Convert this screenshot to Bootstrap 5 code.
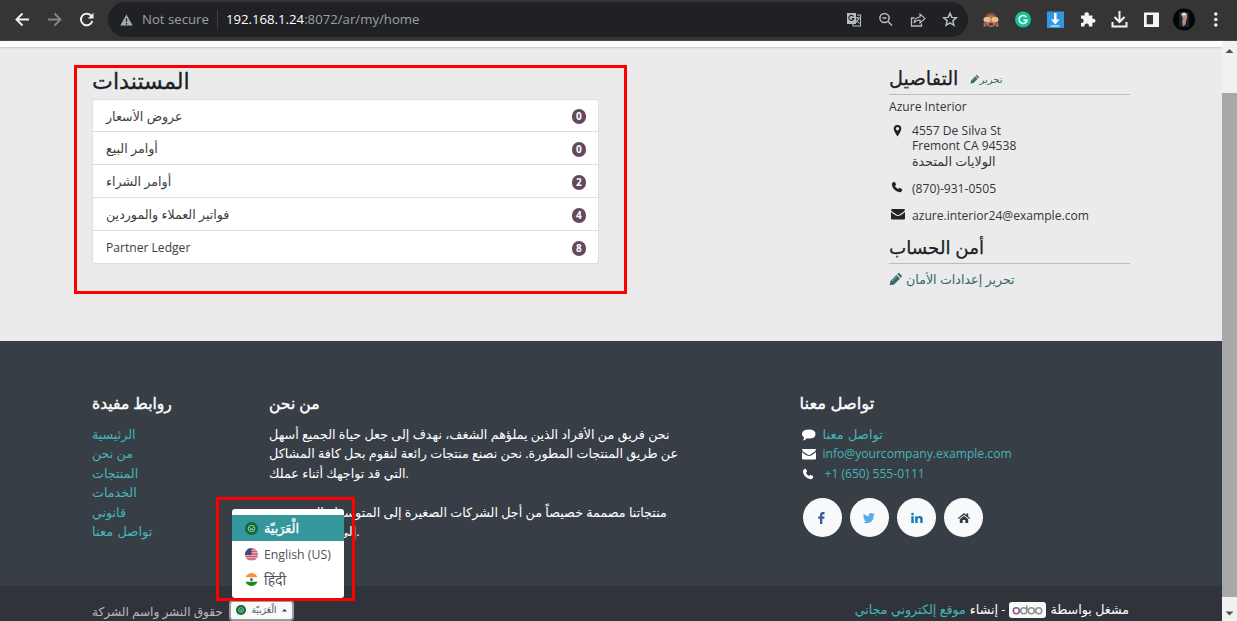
<!DOCTYPE html>
<html lang="ar" dir="ltr">
<head>
<meta charset="utf-8">
<title>حسابي</title>
<link href="https://cdn.jsdelivr.net/npm/bootstrap@5.3.0/dist/css/bootstrap.min.css" rel="stylesheet">
<style>
html,body{height:621px;overflow:hidden}
body{font-family:"Open Sans","DejaVu Sans","Noto Sans",sans-serif;font-size:12.65px;line-height:15.6px;color:#32363a;background:#ebebeb}
a{text-decoration:none}
svg{display:block;flex:none}
.latin{font-size:12.1px}
.chrome-bar{height:41px;background:#353535;border-bottom:1px solid #4a4a4a}
.address{left:108px;width:860px;height:35px;top:2px;border-radius:18px;background:#202124;color:#9aa0a6;font-size:13.2px}
.viewport{height:580px}
.doc{width:1222px}
.top-strip{height:6px;background:#fff;box-shadow:0 1px 2px rgba(0,0,0,.15)}
.portal{height:294px;padding:19px 92px 0 92px}
.docs{width:507px}
.docs h3{font-size:22.2px;line-height:29px;margin:0 0 4px;color:#1c2026;-webkit-text-stroke:.3px}
.docs .list-group{--bs-list-group-border-color:#dfdfdf;--bs-list-group-border-radius:3px}
.docs .list-group-item{height:33px;padding:2px 12px 0 13px;color:#3a3e42}
.count-pill{width:14.5px;height:15px;border-radius:8px;background:#62495b;color:#fff;font-size:10px;font-weight:700;line-height:15px;text-align:center}
.side{width:241px;margin-top:-1px}
.side h4{font-size:19.3px;line-height:25px;color:#1c2026;margin:0;-webkit-text-stroke:.25px}
.side .security{font-size:18.3px;line-height:24px;margin-top:11px}
.teal-dark{color:#35686d}
.rule{height:1px;background:#bcbcbc}
.contact-ico{margin:0 9px 0 2px}
.contact-mail{margin-top:11px}
.contact-mail .contact-ico{margin-right:7px}
.edit-sm{font-size:10px}
.foot{height:245px;background:#383e45;color:#fff;padding:52px 93px 0 92px;line-height:19.4px}
.foot h5{font-size:15.6px;font-weight:400;line-height:20px;margin:0 0 12px;-webkit-text-stroke:.4px}
.foot a,.legal a{color:#45b5b9}
.links-col{width:177px}
.about-col{width:530.5px}
.about-col .text-nowrap{font-size:12.72px}
.foot-ico{margin:0 7px 0 2px}
.spaced{word-spacing:1px;font-size:13px}
.contact-col h5{font-size:16.4px}
.social{width:39px;height:39px;background:#f8f9fa}
.socials{margin-top:15px;padding-left:3px;column-gap:8.3px}
.legal{height:35px;background:#30343a;padding:12px 93px 0 92px;color:#fff}
.legal-left{width:202px;height:24px}
.copy{color:#b9bbbd;font-size:12.1px}
.powered{height:24px;font-size:12.7px}
.lang-btn{width:65px;height:21px;border:2px solid #9a9c9f;border-radius:4px;background:#f8f9fa;font-size:9.2px;color:#4c4f52;padding:0 5px}
.lang-menu{--bs-dropdown-min-width:112px;width:112px;left:232px;top:509px;height:89px;padding:6px 0;border:0;border-radius:3px;font-size:12.3px}
.lang-menu .dropdown-item{height:25.6px;padding:2px 0 0 13px;color:#4f5357;gap:6px}
.lang-menu .dropdown-item.active{background:#35979c;color:#fff}
.lang-menu .native{-webkit-text-stroke:.3px;font-size:12.8px}
.lang-menu .hindi{font-size:14px}
.mark-box{border:3.5px solid #f00;z-index:1100;pointer-events:none}
.mark-docs{left:74px;top:65px;width:553px;height:229px}
.mark-langs{left:216px;top:497px;width:139px;height:104px}
.sbar{width:15px;background:#f1f1f1}
.thumb{height:504px;background:#a8a8a8}
.odoo-tag{background:#f8f9fa;border-radius:3px;width:37px;height:16px}
</style>
</head>
<body class="position-relative">
<svg width="0" height="0" class="position-absolute">
<defs>
<symbol id="pencil" viewBox="0 0 14 14"><path fill="currentColor" d="M.8 13.200l.8-4.700L8 2.100l3.900 3.900L5.500 12.400zM8.900 1.300l1-1q.6-.5 1.200 0l2.600 2.600q.5.600 0 1.200l-1 1z"/><path d="M3.200 8.900l5-5" stroke="#ebebeb" stroke-width=".7"/></symbol>
<symbol id="phone" viewBox="0 0 14 14"><path fill="currentColor" d="M3.200 1.300 4.400 1 6 4.200 4.600 5.700Q5.800 8.200 8.400 9.400L9.900 8l3.100 1.600q.2 1.300-.5 2.300-1 1.200-2.700 1.100Q5.600 12.300 3 8.900.9 6.500 1 3.600q.3-1.800 2.200-2.300z"/></symbol>
<symbol id="mail" viewBox="0 0 14 12"><path fill="currentColor" d="M1 1h12q1 0 1 1Q13.500 3.500 8.500 6.500q-1.500 1-3 0Q.5 3.500 0 2q0-1 1-1zM0 4q4.500 3.800 7 4 2.500-.2 7-4v6.500q0 1-1 1H1q-1 0-1-1z"/></symbol>
<symbol id="arab" viewBox="0 0 14 14"><circle cx="7" cy="7" r="7" fill="#0b6b3a"/><circle cx="7" cy="7" r="3.500" fill="none" stroke="#a9cdb8" stroke-width="1"/><path d="M4.700 6q2.300 3 4.600 0M5 8.200h4" fill="none" stroke="#c6dccf" stroke-width=".8"/></symbol>
</defs></svg>

<nav class="chrome-bar position-relative d-flex align-items-center">
<svg width="108" height="40" fill="none" stroke="#f1f1f1" stroke-width="1.900"><path d="M29 19.500H17M22.500 13.500l-6 6 6 6"/><path stroke="#858585" d="M48 19.500h12M54.500 13.500l6 6-6 6"/><path d="M91.500 16.200a5.800 5.800 0 1 0 .8 4.800"/><path d="M93.500 12.800v5.700h-5.700z" fill="#f1f1f1" stroke="none"/></svg>
<div class="address position-absolute d-flex align-items-center">
<svg class="ms-2" width="22" height="18" viewBox="0 0 22 18"><path d="M10.500 3.500l6.200 11H4.300z" fill="#a6aaae"/><path d="M10.500 7.500v3.300M10.500 12v1.400" stroke="#202124" stroke-width="1.300"/></svg>
<span class="ms-1">Not secure</span><span class="vr ms-2 me-2 my-2"></span><span><span class="text-white">192.168.1.24</span>:8072/ar/my/home</span>
</div>
<svg class="position-absolute start-0 top-0" width="1237" height="40" fill="none" stroke="#b8bbbe" stroke-width="1.500">
<rect x="847" y="13" width="9" height="11" fill="#b8bbbe" stroke="none"/><path d="M853.500 16.500a2.500 2.500 0 1 0 .3 2h-2" stroke="#202124" stroke-width="1.100"/><path d="M857 15h3.500v11h-7l-1-2M855.500 18h4.500M857.500 17v1M859 18q-1 3-3 4.500M856.500 20l3 3.500" stroke-width="1.100"/>
<circle cx="884.500" cy="18" r="4.600"/><path d="M888 21.500l4 4M882.500 18h4"/>
<path d="M914.500 18h-3v8h10v-2.500" stroke-width="1.300"/><path d="M914 23q.5-5.500 6-6v-3l5 4.500-5 4.500v-3q-4 0-6 3z" stroke-width="1.200"/>
<path d="M950 13.200l1.800 4.200 4.500.4-3.400 3 1 4.500-3.900-2.400-3.900 2.400 1-4.500-3.400-3 4.500-.4z"/>
<g stroke="none"><path d="M984.500 24q-1-6 2.500-10 4-3 8 0 3.500 4 2.500 10-6 5-13 0z" fill="#7b5138"/><ellipse cx="991" cy="21" rx="5.200" ry="6" fill="#b5775f"/><rect x="983.500" y="17" width="7" height="5" rx="2.500" fill="#e9bc91"/><rect x="991.500" y="17" width="7" height="5" rx="2.500" fill="#e9bc91"/><ellipse cx="991" cy="24.300" rx="2.300" ry="1.300" fill="#542f29"/><path d="M984 21.500l2.500 5h-3zM998 21.500l-2.500 5h3z" fill="#b18060"/>
<circle cx="1023" cy="19.500" r="8" fill="#15c39a"/><rect x="1047" y="11.500" width="17" height="16.500" fill="#3097e0"/></g>
<path d="M1026.300 17a4 4 0 1 0 .7 3.300h-3.500" stroke="#fff"/><path d="M1055.300 13v8" stroke="#fff" stroke-width="2.500"/><path d="M1051 19.500h8.600l-4.300 5zM1050.500 25.500h9v1h-9z" fill="#fff" stroke="none"/>
<path d="M1081 15.500h3.700q-.9-3.300 2-3.300 2.900 0 2 3.300h3.700v3.300q3.100-.7 3.100 1.900t-3.100 1.900V26.500h-3.500q.3-2.900-2.200-2.900t-2.200 2.900H1081V23q2.700.2 2.700-2.200T1081 18.500z" fill="#f5f5f5" stroke="none"/>
<path d="M1119.500 11v10M1114.500 17l5 5 5-5M1112.500 22v4.500h14V22" stroke="#f5f5f5" stroke-width="2"/>
<path d="M1144 12.500h15v14.500h-15zM1146.700 15v9.300h6.300V15z" fill="#f5f5f5" fill-rule="evenodd" stroke="none"/>
<g stroke="none"><circle cx="1184" cy="19.500" r="11" fill="#050505"/><path d="M1179 12h10v15h-10z" fill="#16213a"/><path d="M1181 15q2-3 5-1.500 2.500 2 .5 6l-1 5-2.500 2-1-5q2-3-1-6.500z" fill="#b98c73"/><path d="M1181 14q3-3 6 0l-3 2z" fill="#dedada"/><g fill="#f1f1f1"><circle cx="1215.800" cy="14" r="1.800"/><circle cx="1215.800" cy="19.500" r="1.800"/><circle cx="1215.800" cy="25" r="1.800"/></g></g>
</svg>
</nav>

<div class="viewport d-flex">
<div class="doc">
<div class="top-strip"></div>
<main class="portal d-flex justify-content-between">
<section class="docs">
<h3>المستندات</h3>
<div class="list-group">
<a href="#" class="list-group-item d-flex justify-content-between align-items-center"><span>عروض الأسعار</span><span class="count-pill">0</span></a>
<a href="#" class="list-group-item d-flex justify-content-between align-items-center"><span>أوامر البيع</span><span class="count-pill">0</span></a>
<a href="#" class="list-group-item d-flex justify-content-between align-items-center"><span>أوامر الشراء</span><span class="count-pill">2</span></a>
<a href="#" class="list-group-item d-flex justify-content-between align-items-center"><span>فواتير العملاء والموردين</span><span class="count-pill">4</span></a>
<a href="#" class="list-group-item d-flex justify-content-between align-items-center"><span class="latin">Partner Ledger</span><span class="count-pill">8</span></a>
</div>
</section>
<aside class="side">
<div class="d-flex align-items-center"><h4>التفاصيل</h4><a href="#" class="teal-dark d-flex align-items-center ms-2 pt-1 edit-sm"><svg width="9" height="9" class="ms-1"><use href="#pencil"/></svg><span>تحرير</span></a></div>
<div class="rule mt-1"></div>
<div class="mt-1 latin">Azure Interior</div>
<div class="d-flex mt-2"><svg width="23" height="16" viewBox="0 0 23 16"><path d="M8.500 2a3.800 3.800 0 0 1 3.800 3.800Q12.300 8 8.500 13.500 4.700 8 4.700 5.800A3.800 3.800 0 0 1 8.500 2zm0 2a1.700 1.700 0 1 0 .01 0z" fill="#1c2026"/></svg><div><span class="latin">4557 De Silva St<br>Fremont CA 94538</span><br>الولايات المتحدة</div></div>
<div class="d-flex mt-2 pt-1 latin"><svg width="12" height="12" class="text-dark contact-ico"><use href="#phone"/></svg><span>(870)-931-0505</span></div>
<div class="d-flex contact-mail latin"><svg width="14" height="12" class="text-dark contact-ico"><use href="#mail"/></svg><span>azure.interior24@example.com</span></div>
<h4 class="security">أمن الحساب</h4>
<div class="rule mt-1 pt-0 mb-1"></div>
<a href="#" class="teal-dark d-flex align-items-center pt-1"><svg width="13" height="13" class="me-1"><use href="#pencil"/></svg><span>تحرير إعدادات الأمان</span></a>
</aside>
</main>

<footer>
<div class="foot d-flex">
<div class="links-col"><h5>روابط مفيدة</h5>
<a href="#" class="d-block">الرئيسية</a><a href="#" class="d-block">من نحن</a><a href="#" class="d-block">المنتجات</a><a href="#" class="d-block">الخدمات</a><a href="#" class="d-block">قانوني</a><a href="#" class="d-block spaced">تواصل معنا</a></div>
<div class="about-col"><h5>من نحن</h5>
<div class="text-nowrap">نحن فريق من الأفراد الذين يملؤهم الشغف، نهدف إلى جعل حياة الجميع أسهل<br>عن طريق المنتجات المطورة. نحن نصنع منتجات رائعة لنقوم بحل كافة المشاكل<br>التي قد تواجهك أثناء عملك.<br><br>منتجاتنا مصممة خصيصاً من أجل الشركات الصغيرة إلى المتوسطة التي ترغب<br>إلى تحسين أدائها.</div></div>
<div class="contact-col"><h5>تواصل معنا</h5>
<div class="d-flex align-items-center"><svg width="23" height="14" viewBox="0 0 23 14"><path d="M9 1.500q6.500 0 6.500 4.500T9 10.500q-1.200 0-2-.2Q5 12.500 2.500 12.500q1.500-1 1.500-3Q2 8.300 2 6q0-4.500 7-4.500z" fill="#fff"/></svg><a href="#" class="spaced">تواصل معنا</a></div>
<div class="d-flex align-items-center latin"><svg width="14" height="12" class="foot-ico"><use href="#mail"/></svg><a href="#">info@yourcompany.example.com</a></div>
<div class="d-flex align-items-center latin"><svg width="12" height="12" class="foot-ico"><use href="#phone"/></svg><a href="#" class="ms-1">+1 (650) 555-0111</a></div>
<div class="d-flex socials">
<span class="social rounded-circle d-flex align-items-center justify-content-center"><svg width="14" height="14"><path d="M9.500 1v2.200H8.300q-1 0-1 1v1.300h2.200L9.200 7.700H7.300V13H5V7.700H3.200V5.500H5V3.900Q5 1 7.900 1z" fill="#3b5998"/></svg></span>
<span class="social rounded-circle d-flex align-items-center justify-content-center"><svg width="14" height="14"><path d="M13 3.200l-1.300 1.300Q11.700 9 8.500 11.200 4.500 13.500 1 11.200q2 0 3.300-1-1.800-.2-2.300-1.700h1Q1.200 7.800 1.200 6l1 .2Q.8 4.700 1.700 2.800q2 2.300 5 2.500Q6.500 2.300 9 2q1.100 0 1.900.8l1.600-.6-1 1.300z" fill="#55acee"/></svg></span>
<span class="social rounded-circle d-flex align-items-center justify-content-center"><svg width="14" height="14"><path d="M1.300 5.300h2.400V12H1.300zM5.200 5.300h2.300v1q.7-1.200 2.300-1.200 2.900 0 2.900 3.200V12h-2.400V8.500q0-1.600-1.200-1.600-1.500 0-1.500 1.600V12H5.200z" fill="#1077b5"/><circle cx="2.500" cy="3.100" r="1.300" fill="#1077b5"/></svg></span>
<span class="social rounded-circle d-flex align-items-center justify-content-center"><svg width="14" height="14"><path d="M.8 7.200L7 2l2.500 2.100V2.500h1.700v3l2 1.700-.8.900L7 3.700 1.600 8.100zM7 4.800l4.200 3.500V12H8.300V9H5.700v3H2.800V8.300z" fill="#343a40"/></svg></span>
</div></div>
</div>
<div class="legal d-flex justify-content-between">
<div class="d-flex align-items-center legal-left"><span class="copy pt-1">حقوق النشر واسم الشركة</span><button class="lang-btn d-flex align-items-center justify-content-between ms-auto"><svg width="10" height="10"><use href="#arab"/></svg><span>الْعَرَبيّة</span><svg width="5" height="4"><path d="M0 3.500L2.500 1 5 3.500z" fill="#333"/></svg></button></div>
<div dir="rtl" class="powered d-flex align-items-center gap-1"><span>مشغل بواسطة</span><span class="odoo-tag d-flex justify-content-center align-items-center"><svg width="31" height="12" fill="none" stroke="#8f8f8f" stroke-width="1.500"><circle cx="4.300" cy="6.800" r="3" stroke="#875a7b"/><circle cx="11.800" cy="6.800" r="3"/><path d="M14.800 1.500v5.300"/><circle cx="19.300" cy="6.800" r="3"/><circle cx="26.700" cy="6.800" r="3"/></svg></span><span>- إنشاء</span><a href="#">موقع إلكتروني مجاني</a></div>
</div>
</footer>
</div>
<div class="sbar d-flex flex-column align-items-center"><svg width="15" height="52"><path d="M3.500 12L7.500 8l4 4z" fill="#505050"/></svg><div class="thumb w-100"></div><svg width="15" height="24"><path d="M3.500 14.500l4 4 4-4z" fill="#505050"/></svg></div>
</div>

<div class="dropdown-menu show lang-menu position-absolute">
<a href="#" class="dropdown-item active d-flex align-items-center"><svg width="13" height="13"><use href="#arab"/></svg><span class="native">الْعَرَبيّة</span></a>
<a href="#" class="dropdown-item d-flex align-items-center"><svg width="13" height="13"><clipPath id="c"><circle cx="6.500" cy="6.500" r="6.500"/></clipPath><g clip-path="url(#c)"><path fill="#efc5ce" d="M0 0h13v13H0z"/><path d="M0 1h13M0 3.500h13M0 6h13M0 8.500h13M0 11h13" stroke="#c75568" stroke-width="1.300"/><path fill="#3f477c" d="M0 0h6.500v7H0z"/></g></svg><span>English (US)</span></a>
<a href="#" class="dropdown-item d-flex align-items-center"><svg width="13" height="13"><g clip-path="url(#c)"><path fill="#fff" d="M0 0h13v13H0z"/><path fill="#f79433" d="M0 0h13v4.300H0z"/><path fill="#178b1c" d="M0 8.700h13V13H0z"/></g><circle cx="6.500" cy="6.500" r="1.500" fill="#5a5ab0"/></svg><span class="hindi">हिंदी</span></a>
</div>
<div class="mark-box mark-docs position-absolute"></div>
<div class="mark-box mark-langs position-absolute"></div>
<script src="https://cdn.jsdelivr.net/npm/bootstrap@5.3.0/dist/js/bootstrap.bundle.min.js"></script>
</body>
</html>
